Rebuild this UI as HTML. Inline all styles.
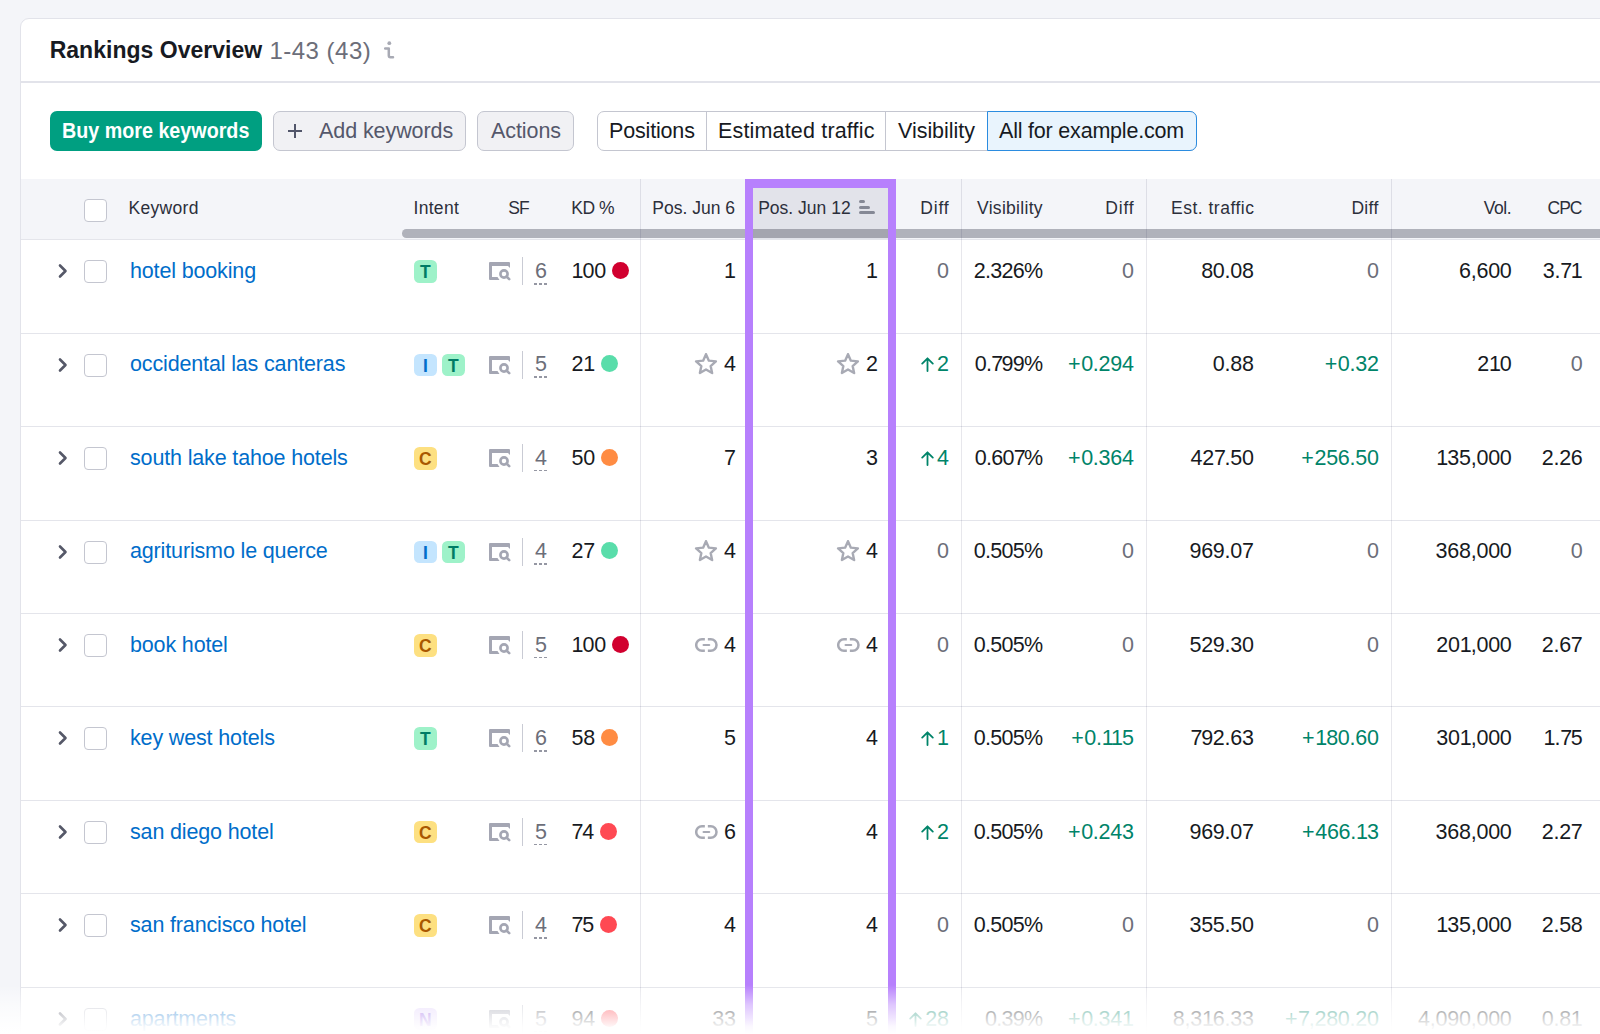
<!DOCTYPE html>
<html><head><meta charset="utf-8"><style>
html,body{margin:0;padding:0;width:1600px;height:1034px;overflow:hidden;background:#f4f5f9;font-family:"Liberation Sans",sans-serif;}
.t{position:absolute;white-space:nowrap;}
.a{position:absolute;}
</style></head><body>

<div class="a" style="left:20px;top:18px;width:1600px;height:1100px;background:#fff;border:1px solid #e2e3ea;border-radius:9px;box-sizing:border-box"></div>
<div class="t" style="left:49.68px;top:36.03px;font-size:23px;line-height:28px;color:#171a22;font-weight:700;letter-spacing:0.02px;">Rankings Overview</div>
<div class="t" style="left:269.4px;top:35.58px;font-size:24px;line-height:29px;color:#6c6e79;font-weight:400;letter-spacing:0.5px;">1-43 (43)</div>
<svg class="a" style="left:382px;top:40px" width="14" height="20" viewBox="0 0 14 20"><circle cx="7.3" cy="3.2" r="1.9" fill="#a8aab4"/><path d="M3.2 8.4 H6.8 V15.6 Q6.8 17.2 8.4 17.2 H11" fill="none" stroke="#a8aab4" stroke-width="2.5" stroke-linecap="round" stroke-linejoin="round"/></svg>
<div class="a" style="left:21px;top:81px;width:1579px;height:1.5px;background:#e2e3ea"></div>
<div class="a" style="left:50px;top:111px;width:212px;height:40px;background:#009f81;border-radius:7px"></div>
<div class="t" style="left:61.6px;top:118.18px;font-size:22px;line-height:26px;color:#fff;font-weight:700;letter-spacing:0.015px;transform:scaleX(0.895);transform-origin:0 0">Buy more keywords</div>
<div class="a" style="left:273px;top:111px;width:193px;height:40px;background:#f1f1f4;border:1px solid #c4c6d0;border-radius:7px;box-sizing:border-box"></div>
<div class="a" style="left:288px;top:130px;width:14px;height:2px;background:#52566a"></div><div class="a" style="left:294px;top:124px;width:2px;height:14px;background:#52566a"></div>
<div class="t" style="left:319.0px;top:118.35px;font-size:21.5px;line-height:26px;color:#55586b;font-weight:400;letter-spacing:-0.08000000000000007px;">Add keywords</div>
<div class="a" style="left:477px;top:111px;width:97px;height:40px;background:#f1f1f4;border:1px solid #c4c6d0;border-radius:7px;box-sizing:border-box"></div>
<div class="t" style="left:491.0px;top:118.35px;font-size:21.5px;line-height:26px;color:#55586b;font-weight:400;letter-spacing:-0.07000000000000006px;">Actions</div>
<div class="a" style="left:597px;top:111px;width:600px;height:40px;background:#fff;border:1px solid #c4c6d0;border-radius:7px;box-sizing:border-box"></div>
<div class="a" style="left:706px;top:112px;width:1px;height:38px;background:#c4c6d0"></div>
<div class="a" style="left:885px;top:112px;width:1px;height:38px;background:#c4c6d0"></div>
<div class="a" style="left:987px;top:111px;width:210px;height:40px;background:#e9f4fd;border:1px solid #2b8ce0;border-radius:0 7px 7px 0;box-sizing:border-box"></div>
<div class="t" style="left:609.0px;top:118.35px;font-size:21.5px;line-height:26px;color:#171a22;font-weight:400;letter-spacing:-0.17000000000000004px;">Positions</div>
<div class="t" style="left:718.0px;top:118.35px;font-size:21.5px;line-height:26px;color:#171a22;font-weight:400;letter-spacing:0.17000000000000004px;">Estimated traffic</div>
<div class="t" style="left:898.0px;top:118.35px;font-size:21.5px;line-height:26px;color:#171a22;font-weight:400;letter-spacing:-0.03300000000000003px;">Visibility</div>
<div class="t" style="left:999.0px;top:118.35px;font-size:21.5px;line-height:26px;color:#171a22;font-weight:400;letter-spacing:-0.19999999999999996px;">All for example.com</div>
<div class="a" style="left:21px;top:179px;width:1579px;height:60px;background:#f4f5f9"></div>
<div class="a" style="left:753px;top:179px;width:135px;height:60px;background:#e2e3ea"></div>
<div class="a" style="left:402px;top:229px;width:1250px;height:8.6px;background:#b0b2bb;border-radius:4.3px;z-index:2"></div>
<div class="a" style="left:753px;top:229px;width:135px;height:8.6px;background:#a4a5af;z-index:2"></div>
<div class="a" style="left:21px;top:238.8px;width:1579px;height:1.2px;background:#e4e5eb"></div>
<div class="a" style="left:84px;top:199px;width:23px;height:23px;border:1px solid #c4c6d0;border-radius:4px;box-sizing:border-box;background:#fff"></div>
<div class="t" style="left:128.5px;top:198.04px;font-size:17.5px;line-height:21px;color:#2c2f3b;font-weight:400;letter-spacing:0.3px;">Keyword</div>
<div class="t" style="left:413.5px;top:198.04px;font-size:17.5px;line-height:21px;color:#2c2f3b;font-weight:400;letter-spacing:0.3px;">Intent</div>
<div class="t" style="left:508.3px;top:198.04px;font-size:17.5px;line-height:21px;color:#2c2f3b;font-weight:400;letter-spacing:-1.0px;">SF</div>
<div class="t" style="left:571.3px;top:198.04px;font-size:17.5px;line-height:21px;color:#2c2f3b;font-weight:400;letter-spacing:-0.5px;">KD %</div>
<div class="t" style="right:865.00px;top:198.04px;font-size:17.5px;line-height:21px;color:#2c2f3b;font-weight:400;letter-spacing:0.0px;">Pos. Jun 6</div>
<div class="t" style="left:758.2px;top:198.04px;font-size:17.5px;line-height:21px;color:#2c2f3b;font-weight:400;letter-spacing:0.0px;">Pos. Jun 12</div>
<div class="a" style="left:859px;top:200px;width:6px;height:3px;background:#858895;border-radius:1.5px"></div><div class="a" style="left:859px;top:205.5px;width:11px;height:3px;background:#858895;border-radius:1.5px"></div><div class="a" style="left:859px;top:211px;width:16px;height:3px;background:#858895;border-radius:1.5px"></div>
<div class="t" style="right:650.43px;top:198.04px;font-size:17.5px;line-height:21px;color:#2c2f3b;font-weight:400;letter-spacing:0.867px;">Diff</div>
<div class="t" style="left:977.0px;top:198.04px;font-size:17.5px;line-height:21px;color:#2c2f3b;font-weight:400;letter-spacing:0.3px;">Visibility</div>
<div class="t" style="right:465.43px;top:198.04px;font-size:17.5px;line-height:21px;color:#2c2f3b;font-weight:400;letter-spacing:0.867px;">Diff</div>
<div class="t" style="left:1171.0px;top:198.04px;font-size:17.5px;line-height:21px;color:#2c2f3b;font-weight:400;letter-spacing:0.5px;">Est. traffic</div>
<div class="t" style="right:221.29px;top:198.04px;font-size:17.5px;line-height:21px;color:#2c2f3b;font-weight:400;letter-spacing:0.352px;">Diff</div>
<div class="t" style="right:88.95px;top:198.04px;font-size:17.5px;line-height:21px;color:#2c2f3b;font-weight:400;letter-spacing:-0.452px;">Vol.</div>
<div class="t" style="right:18.50px;top:198.04px;font-size:17.5px;line-height:21px;color:#2c2f3b;font-weight:400;letter-spacing:-1.0px;">CPC</div>
<div class="a" style="left:640px;top:179px;width:1px;height:900px;background:rgba(30,30,80,0.105);z-index:2"></div>
<div class="a" style="left:961px;top:179px;width:1px;height:900px;background:rgba(30,30,80,0.105);z-index:2"></div>
<div class="a" style="left:1146px;top:179px;width:1px;height:900px;background:rgba(30,30,80,0.105);z-index:2"></div>
<div class="a" style="left:1391px;top:179px;width:1px;height:900px;background:rgba(30,30,80,0.105);z-index:2"></div>
<div class="a" style="left:21px;top:332.60px;width:1579px;height:1px;background:#e4e5eb"></div>
<svg width="12" height="16" viewBox="0 0 12 16" style="position:absolute;left:57px;top:263.20px"><path d="M3 2.5 L8.5 8 L3 13.5" fill="none" stroke="#555868" stroke-width="2.6" stroke-linecap="round" stroke-linejoin="round"/></svg>
<div class="a" style="left:84px;top:260.20px;width:23px;height:23px;border:1px solid #c4c6d0;border-radius:4px;box-sizing:border-box;background:#fff"></div>
<div class="t" style="left:130px;top:258.05px;font-size:21.5px;line-height:26px;color:#006dca;font-weight:400;letter-spacing:-0.15px;">hotel booking</div>
<div class="a" style="left:414px;top:260.20px;width:22.7px;height:22.6px;background:#9ef2c9;border-radius:5.5px;color:#007c65;font-weight:700;font-size:17.5px;line-height:24px;text-align:center">T</div>
<svg width="22" height="19" viewBox="0 0 22 19" style="position:absolute;left:489px;top:262.20px"><path d="M0 1 Q0 0 1 0 H20 Q21 0 21 1 V6 L19 4 V4 H3 V15 H8.5 L10.5 18 H1 Q0 18 0 17 Z" fill="#a4a6b3"/><circle cx="15" cy="12" r="3.6" fill="none" stroke="#a4a6b3" stroke-width="2.6"/><path d="M17.5 14.5 L20.2 17.2" stroke="#a4a6b3" stroke-width="2.6" stroke-linecap="round"/></svg>
<div class="a" style="left:522px;top:257.20px;width:1.3px;height:28px;background:#c9cbd4"></div>
<div class="t" style="left:535px;top:258.05px;font-size:21.5px;line-height:26px;color:#6c6e79;font-weight:400;letter-spacing:0px;">6</div>
<div class="a" style="left:534.4px;top:283.00px;width:12.8px;height:1.5px;background:repeating-linear-gradient(to right,#9597a3 0 3.2px,transparent 3.2px 4.8px)"></div>
<div class="t" style="left:571.5px;top:258.05px;font-size:21.5px;line-height:26px;color:#171a22;font-weight:400;letter-spacing:0px;"><span style="letter-spacing:-1.00px">1</span><span style="letter-spacing:-0.25px">0</span>0<span style="display:inline-block;width:17px;height:17px;border-radius:50%;background:#d1002f;vertical-align:baseline;position:relative;top:1px;margin-left:5.5px"></span></div>
<div class="t" style="right:864.00px;top:258.05px;font-size:21.5px;line-height:26px;color:#171a22;font-weight:400;letter-spacing:0px;">1</div>
<div class="t" style="right:722.00px;top:258.05px;font-size:21.5px;line-height:26px;color:#171a22;font-weight:400;letter-spacing:0px;">1</div>
<div class="t" style="right:651.00px;top:258.05px;font-size:21.5px;line-height:26px;color:#6c6e79;font-weight:400;letter-spacing:0px;">0</div>
<div class="t" style="right:557.00px;top:258.05px;font-size:21.5px;line-height:26px;color:#171a22;font-weight:400;letter-spacing:0px;"><span style="letter-spacing:-0.75px">2</span><span style="letter-spacing:-0.75px">.</span><span style="letter-spacing:-0.75px">3</span><span style="letter-spacing:-0.75px">2</span><span style="letter-spacing:-0.75px">6</span>%</div>
<div class="t" style="right:466.00px;top:258.05px;font-size:21.5px;line-height:26px;color:#6c6e79;font-weight:400;letter-spacing:0px;">0</div>
<div class="t" style="right:346.00px;top:258.05px;font-size:21.5px;line-height:26px;color:#171a22;font-weight:400;letter-spacing:0px;"><span style="letter-spacing:-0.25px">8</span><span style="letter-spacing:-0.25px">0</span><span style="letter-spacing:-0.25px">.</span><span style="letter-spacing:-0.25px">0</span>8</div>
<div class="t" style="right:221.00px;top:258.05px;font-size:21.5px;line-height:26px;color:#6c6e79;font-weight:400;letter-spacing:0px;">0</div>
<div class="t" style="right:88.20px;top:258.05px;font-size:21.5px;line-height:26px;color:#171a22;font-weight:400;letter-spacing:0px;"><span style="letter-spacing:-0.25px">6</span><span style="letter-spacing:-0.25px">,</span><span style="letter-spacing:-0.25px">6</span><span style="letter-spacing:-0.25px">0</span>0</div>
<div class="t" style="right:17.20px;top:258.05px;font-size:21.5px;line-height:26px;color:#171a22;font-weight:400;letter-spacing:0px;"><span style="letter-spacing:-0.25px">3</span><span style="letter-spacing:-0.25px">.</span><span style="letter-spacing:-1.30px">7</span>1</div>
<div class="a" style="left:21px;top:426.07px;width:1579px;height:1px;background:#e4e5eb"></div>
<svg width="12" height="16" viewBox="0 0 12 16" style="position:absolute;left:57px;top:356.64px"><path d="M3 2.5 L8.5 8 L3 13.5" fill="none" stroke="#555868" stroke-width="2.6" stroke-linecap="round" stroke-linejoin="round"/></svg>
<div class="a" style="left:84px;top:353.64px;width:23px;height:23px;border:1px solid #c4c6d0;border-radius:4px;box-sizing:border-box;background:#fff"></div>
<div class="t" style="left:130px;top:351.49px;font-size:21.5px;line-height:26px;color:#006dca;font-weight:400;letter-spacing:-0.15px;">occidental las canteras</div>
<div class="a" style="left:414px;top:353.64px;width:22.7px;height:22.6px;background:#c4e5fe;border-radius:5.5px;color:#006dca;font-weight:700;font-size:17.5px;line-height:24px;text-align:center">I</div>
<div class="a" style="left:442px;top:353.64px;width:22.7px;height:22.6px;background:#9ef2c9;border-radius:5.5px;color:#007c65;font-weight:700;font-size:17.5px;line-height:24px;text-align:center">T</div>
<svg width="22" height="19" viewBox="0 0 22 19" style="position:absolute;left:489px;top:355.64px"><path d="M0 1 Q0 0 1 0 H20 Q21 0 21 1 V6 L19 4 V4 H3 V15 H8.5 L10.5 18 H1 Q0 18 0 17 Z" fill="#a4a6b3"/><circle cx="15" cy="12" r="3.6" fill="none" stroke="#a4a6b3" stroke-width="2.6"/><path d="M17.5 14.5 L20.2 17.2" stroke="#a4a6b3" stroke-width="2.6" stroke-linecap="round"/></svg>
<div class="a" style="left:522px;top:350.64px;width:1.3px;height:28px;background:#c9cbd4"></div>
<div class="t" style="left:535px;top:351.49px;font-size:21.5px;line-height:26px;color:#6c6e79;font-weight:400;letter-spacing:0px;">5</div>
<div class="a" style="left:534.4px;top:376.44px;width:12.8px;height:1.5px;background:repeating-linear-gradient(to right,#9597a3 0 3.2px,transparent 3.2px 4.8px)"></div>
<div class="t" style="left:571.5px;top:351.49px;font-size:21.5px;line-height:26px;color:#171a22;font-weight:400;letter-spacing:0px;"><span style="letter-spacing:-0.25px">2</span>1<span style="display:inline-block;width:17px;height:17px;border-radius:50%;background:#59ddaa;vertical-align:baseline;position:relative;top:1px;margin-left:5.5px"></span></div>
<div class="t" style="right:864.00px;top:351.49px;font-size:21.5px;line-height:26px;color:#171a22;font-weight:400;letter-spacing:0px;"><svg width="24" height="22" viewBox="0 0 24 22" style="display:inline-block;vertical-align:-3.5px;margin-right:6.4px"><path d="M12.00 1.20 L14.87 7.65 L21.89 8.39 L16.65 13.11 L18.11 20.01 L12.00 16.49 L5.89 20.01 L7.35 13.11 L2.11 8.39 L9.13 7.65 Z" fill="none" stroke="#a8aab4" stroke-width="2.4" stroke-linejoin="round"/></svg>4</div>
<div class="t" style="right:722.00px;top:351.49px;font-size:21.5px;line-height:26px;color:#171a22;font-weight:400;letter-spacing:0px;"><svg width="24" height="22" viewBox="0 0 24 22" style="display:inline-block;vertical-align:-3.5px;margin-right:6.4px"><path d="M12.00 1.20 L14.87 7.65 L21.89 8.39 L16.65 13.11 L18.11 20.01 L12.00 16.49 L5.89 20.01 L7.35 13.11 L2.11 8.39 L9.13 7.65 Z" fill="none" stroke="#a8aab4" stroke-width="2.4" stroke-linejoin="round"/></svg>2</div>
<div class="t" style="right:651.00px;top:351.49px;font-size:21.5px;line-height:26px;color:#008469;font-weight:400;letter-spacing:0px;"><svg width="13" height="15" viewBox="0 0 13 15" style="display:inline-block;vertical-align:-1px;margin-right:3px"><path d="M6.5 14 V1.4 M1.2 6.6 L6.5 1.3 L11.8 6.6" fill="none" stroke="#008469" stroke-width="1.8" stroke-linecap="round" stroke-linejoin="round"/></svg>2</div>
<div class="t" style="right:557.00px;top:351.49px;font-size:21.5px;line-height:26px;color:#171a22;font-weight:400;letter-spacing:0px;"><span style="letter-spacing:-0.75px">0</span><span style="letter-spacing:-0.75px">.</span><span style="letter-spacing:-1.80px">7</span><span style="letter-spacing:-0.75px">9</span><span style="letter-spacing:-0.75px">9</span>%</div>
<div class="t" style="right:466.00px;top:351.49px;font-size:21.5px;line-height:26px;color:#008469;font-weight:400;letter-spacing:0px;"><span style="letter-spacing:0.50px">+</span><span style="letter-spacing:-0.25px">0</span><span style="letter-spacing:-0.25px">.</span><span style="letter-spacing:-0.25px">2</span><span style="letter-spacing:-0.25px">9</span>4</div>
<div class="t" style="right:346.00px;top:351.49px;font-size:21.5px;line-height:26px;color:#171a22;font-weight:400;letter-spacing:0px;"><span style="letter-spacing:-0.25px">0</span><span style="letter-spacing:-0.25px">.</span><span style="letter-spacing:-0.25px">8</span>8</div>
<div class="t" style="right:221.00px;top:351.49px;font-size:21.5px;line-height:26px;color:#008469;font-weight:400;letter-spacing:0px;"><span style="letter-spacing:0.50px">+</span><span style="letter-spacing:-0.25px">0</span><span style="letter-spacing:-0.25px">.</span><span style="letter-spacing:-0.25px">3</span>2</div>
<div class="t" style="right:88.20px;top:351.49px;font-size:21.5px;line-height:26px;color:#171a22;font-weight:400;letter-spacing:0px;"><span style="letter-spacing:-0.25px">2</span><span style="letter-spacing:-1.00px">1</span>0</div>
<div class="t" style="right:17.20px;top:351.49px;font-size:21.5px;line-height:26px;color:#6c6e79;font-weight:400;letter-spacing:0px;">0</div>
<div class="a" style="left:21px;top:519.54px;width:1579px;height:1px;background:#e4e5eb"></div>
<svg width="12" height="16" viewBox="0 0 12 16" style="position:absolute;left:57px;top:450.08px"><path d="M3 2.5 L8.5 8 L3 13.5" fill="none" stroke="#555868" stroke-width="2.6" stroke-linecap="round" stroke-linejoin="round"/></svg>
<div class="a" style="left:84px;top:447.08px;width:23px;height:23px;border:1px solid #c4c6d0;border-radius:4px;box-sizing:border-box;background:#fff"></div>
<div class="t" style="left:130px;top:444.93px;font-size:21.5px;line-height:26px;color:#006dca;font-weight:400;letter-spacing:-0.15px;">south lake tahoe hotels</div>
<div class="a" style="left:414px;top:447.08px;width:22.7px;height:22.6px;background:#fde081;border-radius:5.5px;color:#a95700;font-weight:700;font-size:17.5px;line-height:24px;text-align:center">C</div>
<svg width="22" height="19" viewBox="0 0 22 19" style="position:absolute;left:489px;top:449.08px"><path d="M0 1 Q0 0 1 0 H20 Q21 0 21 1 V6 L19 4 V4 H3 V15 H8.5 L10.5 18 H1 Q0 18 0 17 Z" fill="#a4a6b3"/><circle cx="15" cy="12" r="3.6" fill="none" stroke="#a4a6b3" stroke-width="2.6"/><path d="M17.5 14.5 L20.2 17.2" stroke="#a4a6b3" stroke-width="2.6" stroke-linecap="round"/></svg>
<div class="a" style="left:522px;top:444.08px;width:1.3px;height:28px;background:#c9cbd4"></div>
<div class="t" style="left:535px;top:444.93px;font-size:21.5px;line-height:26px;color:#6c6e79;font-weight:400;letter-spacing:0px;">4</div>
<div class="a" style="left:534.4px;top:469.88px;width:12.8px;height:1.5px;background:repeating-linear-gradient(to right,#9597a3 0 3.2px,transparent 3.2px 4.8px)"></div>
<div class="t" style="left:571.5px;top:444.93px;font-size:21.5px;line-height:26px;color:#171a22;font-weight:400;letter-spacing:0px;"><span style="letter-spacing:-0.25px">5</span>0<span style="display:inline-block;width:17px;height:17px;border-radius:50%;background:#ff8c43;vertical-align:baseline;position:relative;top:1px;margin-left:5.5px"></span></div>
<div class="t" style="right:864.00px;top:444.93px;font-size:21.5px;line-height:26px;color:#171a22;font-weight:400;letter-spacing:0px;">7</div>
<div class="t" style="right:722.00px;top:444.93px;font-size:21.5px;line-height:26px;color:#171a22;font-weight:400;letter-spacing:0px;">3</div>
<div class="t" style="right:651.00px;top:444.93px;font-size:21.5px;line-height:26px;color:#008469;font-weight:400;letter-spacing:0px;"><svg width="13" height="15" viewBox="0 0 13 15" style="display:inline-block;vertical-align:-1px;margin-right:3px"><path d="M6.5 14 V1.4 M1.2 6.6 L6.5 1.3 L11.8 6.6" fill="none" stroke="#008469" stroke-width="1.8" stroke-linecap="round" stroke-linejoin="round"/></svg>4</div>
<div class="t" style="right:557.00px;top:444.93px;font-size:21.5px;line-height:26px;color:#171a22;font-weight:400;letter-spacing:0px;"><span style="letter-spacing:-0.75px">0</span><span style="letter-spacing:-0.75px">.</span><span style="letter-spacing:-0.75px">6</span><span style="letter-spacing:-0.75px">0</span><span style="letter-spacing:-1.80px">7</span>%</div>
<div class="t" style="right:466.00px;top:444.93px;font-size:21.5px;line-height:26px;color:#008469;font-weight:400;letter-spacing:0px;"><span style="letter-spacing:0.50px">+</span><span style="letter-spacing:-0.25px">0</span><span style="letter-spacing:-0.25px">.</span><span style="letter-spacing:-0.25px">3</span><span style="letter-spacing:-0.25px">6</span>4</div>
<div class="t" style="right:346.00px;top:444.93px;font-size:21.5px;line-height:26px;color:#171a22;font-weight:400;letter-spacing:0px;"><span style="letter-spacing:-0.25px">4</span><span style="letter-spacing:-0.25px">2</span><span style="letter-spacing:-1.30px">7</span><span style="letter-spacing:-0.25px">.</span><span style="letter-spacing:-0.25px">5</span>0</div>
<div class="t" style="right:221.00px;top:444.93px;font-size:21.5px;line-height:26px;color:#008469;font-weight:400;letter-spacing:0px;"><span style="letter-spacing:0.50px">+</span><span style="letter-spacing:-0.25px">2</span><span style="letter-spacing:-0.25px">5</span><span style="letter-spacing:-0.25px">6</span><span style="letter-spacing:-0.25px">.</span><span style="letter-spacing:-0.25px">5</span>0</div>
<div class="t" style="right:88.20px;top:444.93px;font-size:21.5px;line-height:26px;color:#171a22;font-weight:400;letter-spacing:0px;"><span style="letter-spacing:-1.00px">1</span><span style="letter-spacing:-0.25px">3</span><span style="letter-spacing:-0.25px">5</span><span style="letter-spacing:-0.25px">,</span><span style="letter-spacing:-0.25px">0</span><span style="letter-spacing:-0.25px">0</span>0</div>
<div class="t" style="right:17.20px;top:444.93px;font-size:21.5px;line-height:26px;color:#171a22;font-weight:400;letter-spacing:0px;"><span style="letter-spacing:-0.25px">2</span><span style="letter-spacing:-0.25px">.</span><span style="letter-spacing:-0.25px">2</span>6</div>
<div class="a" style="left:21px;top:613.01px;width:1579px;height:1px;background:#e4e5eb"></div>
<svg width="12" height="16" viewBox="0 0 12 16" style="position:absolute;left:57px;top:543.52px"><path d="M3 2.5 L8.5 8 L3 13.5" fill="none" stroke="#555868" stroke-width="2.6" stroke-linecap="round" stroke-linejoin="round"/></svg>
<div class="a" style="left:84px;top:540.52px;width:23px;height:23px;border:1px solid #c4c6d0;border-radius:4px;box-sizing:border-box;background:#fff"></div>
<div class="t" style="left:130px;top:538.37px;font-size:21.5px;line-height:26px;color:#006dca;font-weight:400;letter-spacing:-0.15px;">agriturismo le querce</div>
<div class="a" style="left:414px;top:540.52px;width:22.7px;height:22.6px;background:#c4e5fe;border-radius:5.5px;color:#006dca;font-weight:700;font-size:17.5px;line-height:24px;text-align:center">I</div>
<div class="a" style="left:442px;top:540.52px;width:22.7px;height:22.6px;background:#9ef2c9;border-radius:5.5px;color:#007c65;font-weight:700;font-size:17.5px;line-height:24px;text-align:center">T</div>
<svg width="22" height="19" viewBox="0 0 22 19" style="position:absolute;left:489px;top:542.52px"><path d="M0 1 Q0 0 1 0 H20 Q21 0 21 1 V6 L19 4 V4 H3 V15 H8.5 L10.5 18 H1 Q0 18 0 17 Z" fill="#a4a6b3"/><circle cx="15" cy="12" r="3.6" fill="none" stroke="#a4a6b3" stroke-width="2.6"/><path d="M17.5 14.5 L20.2 17.2" stroke="#a4a6b3" stroke-width="2.6" stroke-linecap="round"/></svg>
<div class="a" style="left:522px;top:537.52px;width:1.3px;height:28px;background:#c9cbd4"></div>
<div class="t" style="left:535px;top:538.37px;font-size:21.5px;line-height:26px;color:#6c6e79;font-weight:400;letter-spacing:0px;">4</div>
<div class="a" style="left:534.4px;top:563.32px;width:12.8px;height:1.5px;background:repeating-linear-gradient(to right,#9597a3 0 3.2px,transparent 3.2px 4.8px)"></div>
<div class="t" style="left:571.5px;top:538.37px;font-size:21.5px;line-height:26px;color:#171a22;font-weight:400;letter-spacing:0px;"><span style="letter-spacing:-0.25px">2</span>7<span style="display:inline-block;width:17px;height:17px;border-radius:50%;background:#59ddaa;vertical-align:baseline;position:relative;top:1px;margin-left:5.5px"></span></div>
<div class="t" style="right:864.00px;top:538.37px;font-size:21.5px;line-height:26px;color:#171a22;font-weight:400;letter-spacing:0px;"><svg width="24" height="22" viewBox="0 0 24 22" style="display:inline-block;vertical-align:-3.5px;margin-right:6.4px"><path d="M12.00 1.20 L14.87 7.65 L21.89 8.39 L16.65 13.11 L18.11 20.01 L12.00 16.49 L5.89 20.01 L7.35 13.11 L2.11 8.39 L9.13 7.65 Z" fill="none" stroke="#a8aab4" stroke-width="2.4" stroke-linejoin="round"/></svg>4</div>
<div class="t" style="right:722.00px;top:538.37px;font-size:21.5px;line-height:26px;color:#171a22;font-weight:400;letter-spacing:0px;"><svg width="24" height="22" viewBox="0 0 24 22" style="display:inline-block;vertical-align:-3.5px;margin-right:6.4px"><path d="M12.00 1.20 L14.87 7.65 L21.89 8.39 L16.65 13.11 L18.11 20.01 L12.00 16.49 L5.89 20.01 L7.35 13.11 L2.11 8.39 L9.13 7.65 Z" fill="none" stroke="#a8aab4" stroke-width="2.4" stroke-linejoin="round"/></svg>4</div>
<div class="t" style="right:651.00px;top:538.37px;font-size:21.5px;line-height:26px;color:#6c6e79;font-weight:400;letter-spacing:0px;">0</div>
<div class="t" style="right:557.00px;top:538.37px;font-size:21.5px;line-height:26px;color:#171a22;font-weight:400;letter-spacing:0px;"><span style="letter-spacing:-0.75px">0</span><span style="letter-spacing:-0.75px">.</span><span style="letter-spacing:-0.75px">5</span><span style="letter-spacing:-0.75px">0</span><span style="letter-spacing:-0.75px">5</span>%</div>
<div class="t" style="right:466.00px;top:538.37px;font-size:21.5px;line-height:26px;color:#6c6e79;font-weight:400;letter-spacing:0px;">0</div>
<div class="t" style="right:346.00px;top:538.37px;font-size:21.5px;line-height:26px;color:#171a22;font-weight:400;letter-spacing:0px;"><span style="letter-spacing:-0.25px">9</span><span style="letter-spacing:-0.25px">6</span><span style="letter-spacing:-0.25px">9</span><span style="letter-spacing:-0.25px">.</span><span style="letter-spacing:-0.25px">0</span>7</div>
<div class="t" style="right:221.00px;top:538.37px;font-size:21.5px;line-height:26px;color:#6c6e79;font-weight:400;letter-spacing:0px;">0</div>
<div class="t" style="right:88.20px;top:538.37px;font-size:21.5px;line-height:26px;color:#171a22;font-weight:400;letter-spacing:0px;"><span style="letter-spacing:-0.25px">3</span><span style="letter-spacing:-0.25px">6</span><span style="letter-spacing:-0.25px">8</span><span style="letter-spacing:-0.25px">,</span><span style="letter-spacing:-0.25px">0</span><span style="letter-spacing:-0.25px">0</span>0</div>
<div class="t" style="right:17.20px;top:538.37px;font-size:21.5px;line-height:26px;color:#6c6e79;font-weight:400;letter-spacing:0px;">0</div>
<div class="a" style="left:21px;top:706.48px;width:1579px;height:1px;background:#e4e5eb"></div>
<svg width="12" height="16" viewBox="0 0 12 16" style="position:absolute;left:57px;top:636.96px"><path d="M3 2.5 L8.5 8 L3 13.5" fill="none" stroke="#555868" stroke-width="2.6" stroke-linecap="round" stroke-linejoin="round"/></svg>
<div class="a" style="left:84px;top:633.96px;width:23px;height:23px;border:1px solid #c4c6d0;border-radius:4px;box-sizing:border-box;background:#fff"></div>
<div class="t" style="left:130px;top:631.81px;font-size:21.5px;line-height:26px;color:#006dca;font-weight:400;letter-spacing:-0.15px;">book hotel</div>
<div class="a" style="left:414px;top:633.96px;width:22.7px;height:22.6px;background:#fde081;border-radius:5.5px;color:#a95700;font-weight:700;font-size:17.5px;line-height:24px;text-align:center">C</div>
<svg width="22" height="19" viewBox="0 0 22 19" style="position:absolute;left:489px;top:635.96px"><path d="M0 1 Q0 0 1 0 H20 Q21 0 21 1 V6 L19 4 V4 H3 V15 H8.5 L10.5 18 H1 Q0 18 0 17 Z" fill="#a4a6b3"/><circle cx="15" cy="12" r="3.6" fill="none" stroke="#a4a6b3" stroke-width="2.6"/><path d="M17.5 14.5 L20.2 17.2" stroke="#a4a6b3" stroke-width="2.6" stroke-linecap="round"/></svg>
<div class="a" style="left:522px;top:630.96px;width:1.3px;height:28px;background:#c9cbd4"></div>
<div class="t" style="left:535px;top:631.81px;font-size:21.5px;line-height:26px;color:#6c6e79;font-weight:400;letter-spacing:0px;">5</div>
<div class="a" style="left:534.4px;top:656.76px;width:12.8px;height:1.5px;background:repeating-linear-gradient(to right,#9597a3 0 3.2px,transparent 3.2px 4.8px)"></div>
<div class="t" style="left:571.5px;top:631.81px;font-size:21.5px;line-height:26px;color:#171a22;font-weight:400;letter-spacing:0px;"><span style="letter-spacing:-1.00px">1</span><span style="letter-spacing:-0.25px">0</span>0<span style="display:inline-block;width:17px;height:17px;border-radius:50%;background:#d1002f;vertical-align:baseline;position:relative;top:1px;margin-left:5.5px"></span></div>
<div class="t" style="right:864.00px;top:631.81px;font-size:21.5px;line-height:26px;color:#171a22;font-weight:400;letter-spacing:0px;"><svg width="23" height="14" viewBox="0 0 23 14" style="display:inline-block;vertical-align:-0.3px;margin-right:5.8px"><path d="M9.85 1.25 H6.95 A5.75 5.75 0 0 0 6.95 12.75 H9.85 M12.85 1.25 H15.75 A5.75 5.75 0 0 1 15.75 12.75 H12.85" fill="none" stroke="#a8aab4" stroke-width="2.5" stroke-linecap="butt"/><path d="M8.6 7 H14.2" fill="none" stroke="#a8aab4" stroke-width="2.2" stroke-linecap="round"/></svg>4</div>
<div class="t" style="right:722.00px;top:631.81px;font-size:21.5px;line-height:26px;color:#171a22;font-weight:400;letter-spacing:0px;"><svg width="23" height="14" viewBox="0 0 23 14" style="display:inline-block;vertical-align:-0.3px;margin-right:5.8px"><path d="M9.85 1.25 H6.95 A5.75 5.75 0 0 0 6.95 12.75 H9.85 M12.85 1.25 H15.75 A5.75 5.75 0 0 1 15.75 12.75 H12.85" fill="none" stroke="#a8aab4" stroke-width="2.5" stroke-linecap="butt"/><path d="M8.6 7 H14.2" fill="none" stroke="#a8aab4" stroke-width="2.2" stroke-linecap="round"/></svg>4</div>
<div class="t" style="right:651.00px;top:631.81px;font-size:21.5px;line-height:26px;color:#6c6e79;font-weight:400;letter-spacing:0px;">0</div>
<div class="t" style="right:557.00px;top:631.81px;font-size:21.5px;line-height:26px;color:#171a22;font-weight:400;letter-spacing:0px;"><span style="letter-spacing:-0.75px">0</span><span style="letter-spacing:-0.75px">.</span><span style="letter-spacing:-0.75px">5</span><span style="letter-spacing:-0.75px">0</span><span style="letter-spacing:-0.75px">5</span>%</div>
<div class="t" style="right:466.00px;top:631.81px;font-size:21.5px;line-height:26px;color:#6c6e79;font-weight:400;letter-spacing:0px;">0</div>
<div class="t" style="right:346.00px;top:631.81px;font-size:21.5px;line-height:26px;color:#171a22;font-weight:400;letter-spacing:0px;"><span style="letter-spacing:-0.25px">5</span><span style="letter-spacing:-0.25px">2</span><span style="letter-spacing:-0.25px">9</span><span style="letter-spacing:-0.25px">.</span><span style="letter-spacing:-0.25px">3</span>0</div>
<div class="t" style="right:221.00px;top:631.81px;font-size:21.5px;line-height:26px;color:#6c6e79;font-weight:400;letter-spacing:0px;">0</div>
<div class="t" style="right:88.20px;top:631.81px;font-size:21.5px;line-height:26px;color:#171a22;font-weight:400;letter-spacing:0px;"><span style="letter-spacing:-0.25px">2</span><span style="letter-spacing:-0.25px">0</span><span style="letter-spacing:-1.00px">1</span><span style="letter-spacing:-0.25px">,</span><span style="letter-spacing:-0.25px">0</span><span style="letter-spacing:-0.25px">0</span>0</div>
<div class="t" style="right:17.20px;top:631.81px;font-size:21.5px;line-height:26px;color:#171a22;font-weight:400;letter-spacing:0px;"><span style="letter-spacing:-0.25px">2</span><span style="letter-spacing:-0.25px">.</span><span style="letter-spacing:-0.25px">6</span>7</div>
<div class="a" style="left:21px;top:799.95px;width:1579px;height:1px;background:#e4e5eb"></div>
<svg width="12" height="16" viewBox="0 0 12 16" style="position:absolute;left:57px;top:730.40px"><path d="M3 2.5 L8.5 8 L3 13.5" fill="none" stroke="#555868" stroke-width="2.6" stroke-linecap="round" stroke-linejoin="round"/></svg>
<div class="a" style="left:84px;top:727.40px;width:23px;height:23px;border:1px solid #c4c6d0;border-radius:4px;box-sizing:border-box;background:#fff"></div>
<div class="t" style="left:130px;top:725.25px;font-size:21.5px;line-height:26px;color:#006dca;font-weight:400;letter-spacing:-0.15px;">key west hotels</div>
<div class="a" style="left:414px;top:727.40px;width:22.7px;height:22.6px;background:#9ef2c9;border-radius:5.5px;color:#007c65;font-weight:700;font-size:17.5px;line-height:24px;text-align:center">T</div>
<svg width="22" height="19" viewBox="0 0 22 19" style="position:absolute;left:489px;top:729.40px"><path d="M0 1 Q0 0 1 0 H20 Q21 0 21 1 V6 L19 4 V4 H3 V15 H8.5 L10.5 18 H1 Q0 18 0 17 Z" fill="#a4a6b3"/><circle cx="15" cy="12" r="3.6" fill="none" stroke="#a4a6b3" stroke-width="2.6"/><path d="M17.5 14.5 L20.2 17.2" stroke="#a4a6b3" stroke-width="2.6" stroke-linecap="round"/></svg>
<div class="a" style="left:522px;top:724.40px;width:1.3px;height:28px;background:#c9cbd4"></div>
<div class="t" style="left:535px;top:725.25px;font-size:21.5px;line-height:26px;color:#6c6e79;font-weight:400;letter-spacing:0px;">6</div>
<div class="a" style="left:534.4px;top:750.20px;width:12.8px;height:1.5px;background:repeating-linear-gradient(to right,#9597a3 0 3.2px,transparent 3.2px 4.8px)"></div>
<div class="t" style="left:571.5px;top:725.25px;font-size:21.5px;line-height:26px;color:#171a22;font-weight:400;letter-spacing:0px;"><span style="letter-spacing:-0.25px">5</span>8<span style="display:inline-block;width:17px;height:17px;border-radius:50%;background:#ff8c43;vertical-align:baseline;position:relative;top:1px;margin-left:5.5px"></span></div>
<div class="t" style="right:864.00px;top:725.25px;font-size:21.5px;line-height:26px;color:#171a22;font-weight:400;letter-spacing:0px;">5</div>
<div class="t" style="right:722.00px;top:725.25px;font-size:21.5px;line-height:26px;color:#171a22;font-weight:400;letter-spacing:0px;">4</div>
<div class="t" style="right:651.00px;top:725.25px;font-size:21.5px;line-height:26px;color:#008469;font-weight:400;letter-spacing:0px;"><svg width="13" height="15" viewBox="0 0 13 15" style="display:inline-block;vertical-align:-1px;margin-right:3px"><path d="M6.5 14 V1.4 M1.2 6.6 L6.5 1.3 L11.8 6.6" fill="none" stroke="#008469" stroke-width="1.8" stroke-linecap="round" stroke-linejoin="round"/></svg>1</div>
<div class="t" style="right:557.00px;top:725.25px;font-size:21.5px;line-height:26px;color:#171a22;font-weight:400;letter-spacing:0px;"><span style="letter-spacing:-0.75px">0</span><span style="letter-spacing:-0.75px">.</span><span style="letter-spacing:-0.75px">5</span><span style="letter-spacing:-0.75px">0</span><span style="letter-spacing:-0.75px">5</span>%</div>
<div class="t" style="right:466.00px;top:725.25px;font-size:21.5px;line-height:26px;color:#008469;font-weight:400;letter-spacing:0px;"><span style="letter-spacing:0.50px">+</span><span style="letter-spacing:-0.25px">0</span><span style="letter-spacing:-0.25px">.</span><span style="letter-spacing:-1.00px">1</span><span style="letter-spacing:-1.00px">1</span>5</div>
<div class="t" style="right:346.00px;top:725.25px;font-size:21.5px;line-height:26px;color:#171a22;font-weight:400;letter-spacing:0px;"><span style="letter-spacing:-1.30px">7</span><span style="letter-spacing:-0.25px">9</span><span style="letter-spacing:-0.25px">2</span><span style="letter-spacing:-0.25px">.</span><span style="letter-spacing:-0.25px">6</span>3</div>
<div class="t" style="right:221.00px;top:725.25px;font-size:21.5px;line-height:26px;color:#008469;font-weight:400;letter-spacing:0px;"><span style="letter-spacing:0.50px">+</span><span style="letter-spacing:-1.00px">1</span><span style="letter-spacing:-0.25px">8</span><span style="letter-spacing:-0.25px">0</span><span style="letter-spacing:-0.25px">.</span><span style="letter-spacing:-0.25px">6</span>0</div>
<div class="t" style="right:88.20px;top:725.25px;font-size:21.5px;line-height:26px;color:#171a22;font-weight:400;letter-spacing:0px;"><span style="letter-spacing:-0.25px">3</span><span style="letter-spacing:-0.25px">0</span><span style="letter-spacing:-1.00px">1</span><span style="letter-spacing:-0.25px">,</span><span style="letter-spacing:-0.25px">0</span><span style="letter-spacing:-0.25px">0</span>0</div>
<div class="t" style="right:17.20px;top:725.25px;font-size:21.5px;line-height:26px;color:#171a22;font-weight:400;letter-spacing:0px;"><span style="letter-spacing:-1.00px">1</span><span style="letter-spacing:-0.25px">.</span><span style="letter-spacing:-1.30px">7</span>5</div>
<div class="a" style="left:21px;top:893.42px;width:1579px;height:1px;background:#e4e5eb"></div>
<svg width="12" height="16" viewBox="0 0 12 16" style="position:absolute;left:57px;top:823.84px"><path d="M3 2.5 L8.5 8 L3 13.5" fill="none" stroke="#555868" stroke-width="2.6" stroke-linecap="round" stroke-linejoin="round"/></svg>
<div class="a" style="left:84px;top:820.84px;width:23px;height:23px;border:1px solid #c4c6d0;border-radius:4px;box-sizing:border-box;background:#fff"></div>
<div class="t" style="left:130px;top:818.69px;font-size:21.5px;line-height:26px;color:#006dca;font-weight:400;letter-spacing:-0.15px;">san diego hotel</div>
<div class="a" style="left:414px;top:820.84px;width:22.7px;height:22.6px;background:#fde081;border-radius:5.5px;color:#a95700;font-weight:700;font-size:17.5px;line-height:24px;text-align:center">C</div>
<svg width="22" height="19" viewBox="0 0 22 19" style="position:absolute;left:489px;top:822.84px"><path d="M0 1 Q0 0 1 0 H20 Q21 0 21 1 V6 L19 4 V4 H3 V15 H8.5 L10.5 18 H1 Q0 18 0 17 Z" fill="#a4a6b3"/><circle cx="15" cy="12" r="3.6" fill="none" stroke="#a4a6b3" stroke-width="2.6"/><path d="M17.5 14.5 L20.2 17.2" stroke="#a4a6b3" stroke-width="2.6" stroke-linecap="round"/></svg>
<div class="a" style="left:522px;top:817.84px;width:1.3px;height:28px;background:#c9cbd4"></div>
<div class="t" style="left:535px;top:818.69px;font-size:21.5px;line-height:26px;color:#6c6e79;font-weight:400;letter-spacing:0px;">5</div>
<div class="a" style="left:534.4px;top:843.64px;width:12.8px;height:1.5px;background:repeating-linear-gradient(to right,#9597a3 0 3.2px,transparent 3.2px 4.8px)"></div>
<div class="t" style="left:571.5px;top:818.69px;font-size:21.5px;line-height:26px;color:#171a22;font-weight:400;letter-spacing:0px;"><span style="letter-spacing:-1.30px">7</span>4<span style="display:inline-block;width:17px;height:17px;border-radius:50%;background:#ff4953;vertical-align:baseline;position:relative;top:1px;margin-left:5.5px"></span></div>
<div class="t" style="right:864.00px;top:818.69px;font-size:21.5px;line-height:26px;color:#171a22;font-weight:400;letter-spacing:0px;"><svg width="23" height="14" viewBox="0 0 23 14" style="display:inline-block;vertical-align:-0.3px;margin-right:5.8px"><path d="M9.85 1.25 H6.95 A5.75 5.75 0 0 0 6.95 12.75 H9.85 M12.85 1.25 H15.75 A5.75 5.75 0 0 1 15.75 12.75 H12.85" fill="none" stroke="#a8aab4" stroke-width="2.5" stroke-linecap="butt"/><path d="M8.6 7 H14.2" fill="none" stroke="#a8aab4" stroke-width="2.2" stroke-linecap="round"/></svg>6</div>
<div class="t" style="right:722.00px;top:818.69px;font-size:21.5px;line-height:26px;color:#171a22;font-weight:400;letter-spacing:0px;">4</div>
<div class="t" style="right:651.00px;top:818.69px;font-size:21.5px;line-height:26px;color:#008469;font-weight:400;letter-spacing:0px;"><svg width="13" height="15" viewBox="0 0 13 15" style="display:inline-block;vertical-align:-1px;margin-right:3px"><path d="M6.5 14 V1.4 M1.2 6.6 L6.5 1.3 L11.8 6.6" fill="none" stroke="#008469" stroke-width="1.8" stroke-linecap="round" stroke-linejoin="round"/></svg>2</div>
<div class="t" style="right:557.00px;top:818.69px;font-size:21.5px;line-height:26px;color:#171a22;font-weight:400;letter-spacing:0px;"><span style="letter-spacing:-0.75px">0</span><span style="letter-spacing:-0.75px">.</span><span style="letter-spacing:-0.75px">5</span><span style="letter-spacing:-0.75px">0</span><span style="letter-spacing:-0.75px">5</span>%</div>
<div class="t" style="right:466.00px;top:818.69px;font-size:21.5px;line-height:26px;color:#008469;font-weight:400;letter-spacing:0px;"><span style="letter-spacing:0.50px">+</span><span style="letter-spacing:-0.25px">0</span><span style="letter-spacing:-0.25px">.</span><span style="letter-spacing:-0.25px">2</span><span style="letter-spacing:-0.25px">4</span>3</div>
<div class="t" style="right:346.00px;top:818.69px;font-size:21.5px;line-height:26px;color:#171a22;font-weight:400;letter-spacing:0px;"><span style="letter-spacing:-0.25px">9</span><span style="letter-spacing:-0.25px">6</span><span style="letter-spacing:-0.25px">9</span><span style="letter-spacing:-0.25px">.</span><span style="letter-spacing:-0.25px">0</span>7</div>
<div class="t" style="right:221.00px;top:818.69px;font-size:21.5px;line-height:26px;color:#008469;font-weight:400;letter-spacing:0px;"><span style="letter-spacing:0.50px">+</span><span style="letter-spacing:-0.25px">4</span><span style="letter-spacing:-0.25px">6</span><span style="letter-spacing:-0.25px">6</span><span style="letter-spacing:-0.25px">.</span><span style="letter-spacing:-1.00px">1</span>3</div>
<div class="t" style="right:88.20px;top:818.69px;font-size:21.5px;line-height:26px;color:#171a22;font-weight:400;letter-spacing:0px;"><span style="letter-spacing:-0.25px">3</span><span style="letter-spacing:-0.25px">6</span><span style="letter-spacing:-0.25px">8</span><span style="letter-spacing:-0.25px">,</span><span style="letter-spacing:-0.25px">0</span><span style="letter-spacing:-0.25px">0</span>0</div>
<div class="t" style="right:17.20px;top:818.69px;font-size:21.5px;line-height:26px;color:#171a22;font-weight:400;letter-spacing:0px;"><span style="letter-spacing:-0.25px">2</span><span style="letter-spacing:-0.25px">.</span><span style="letter-spacing:-0.25px">2</span>7</div>
<div class="a" style="left:21px;top:986.89px;width:1579px;height:1px;background:#e4e5eb"></div>
<svg width="12" height="16" viewBox="0 0 12 16" style="position:absolute;left:57px;top:917.28px"><path d="M3 2.5 L8.5 8 L3 13.5" fill="none" stroke="#555868" stroke-width="2.6" stroke-linecap="round" stroke-linejoin="round"/></svg>
<div class="a" style="left:84px;top:914.28px;width:23px;height:23px;border:1px solid #c4c6d0;border-radius:4px;box-sizing:border-box;background:#fff"></div>
<div class="t" style="left:130px;top:912.13px;font-size:21.5px;line-height:26px;color:#006dca;font-weight:400;letter-spacing:-0.15px;">san francisco hotel</div>
<div class="a" style="left:414px;top:914.28px;width:22.7px;height:22.6px;background:#fde081;border-radius:5.5px;color:#a95700;font-weight:700;font-size:17.5px;line-height:24px;text-align:center">C</div>
<svg width="22" height="19" viewBox="0 0 22 19" style="position:absolute;left:489px;top:916.28px"><path d="M0 1 Q0 0 1 0 H20 Q21 0 21 1 V6 L19 4 V4 H3 V15 H8.5 L10.5 18 H1 Q0 18 0 17 Z" fill="#a4a6b3"/><circle cx="15" cy="12" r="3.6" fill="none" stroke="#a4a6b3" stroke-width="2.6"/><path d="M17.5 14.5 L20.2 17.2" stroke="#a4a6b3" stroke-width="2.6" stroke-linecap="round"/></svg>
<div class="a" style="left:522px;top:911.28px;width:1.3px;height:28px;background:#c9cbd4"></div>
<div class="t" style="left:535px;top:912.13px;font-size:21.5px;line-height:26px;color:#6c6e79;font-weight:400;letter-spacing:0px;">4</div>
<div class="a" style="left:534.4px;top:937.08px;width:12.8px;height:1.5px;background:repeating-linear-gradient(to right,#9597a3 0 3.2px,transparent 3.2px 4.8px)"></div>
<div class="t" style="left:571.5px;top:912.13px;font-size:21.5px;line-height:26px;color:#171a22;font-weight:400;letter-spacing:0px;"><span style="letter-spacing:-1.30px">7</span>5<span style="display:inline-block;width:17px;height:17px;border-radius:50%;background:#ff4953;vertical-align:baseline;position:relative;top:1px;margin-left:5.5px"></span></div>
<div class="t" style="right:864.00px;top:912.13px;font-size:21.5px;line-height:26px;color:#171a22;font-weight:400;letter-spacing:0px;">4</div>
<div class="t" style="right:722.00px;top:912.13px;font-size:21.5px;line-height:26px;color:#171a22;font-weight:400;letter-spacing:0px;">4</div>
<div class="t" style="right:651.00px;top:912.13px;font-size:21.5px;line-height:26px;color:#6c6e79;font-weight:400;letter-spacing:0px;">0</div>
<div class="t" style="right:557.00px;top:912.13px;font-size:21.5px;line-height:26px;color:#171a22;font-weight:400;letter-spacing:0px;"><span style="letter-spacing:-0.75px">0</span><span style="letter-spacing:-0.75px">.</span><span style="letter-spacing:-0.75px">5</span><span style="letter-spacing:-0.75px">0</span><span style="letter-spacing:-0.75px">5</span>%</div>
<div class="t" style="right:466.00px;top:912.13px;font-size:21.5px;line-height:26px;color:#6c6e79;font-weight:400;letter-spacing:0px;">0</div>
<div class="t" style="right:346.00px;top:912.13px;font-size:21.5px;line-height:26px;color:#171a22;font-weight:400;letter-spacing:0px;"><span style="letter-spacing:-0.25px">3</span><span style="letter-spacing:-0.25px">5</span><span style="letter-spacing:-0.25px">5</span><span style="letter-spacing:-0.25px">.</span><span style="letter-spacing:-0.25px">5</span>0</div>
<div class="t" style="right:221.00px;top:912.13px;font-size:21.5px;line-height:26px;color:#6c6e79;font-weight:400;letter-spacing:0px;">0</div>
<div class="t" style="right:88.20px;top:912.13px;font-size:21.5px;line-height:26px;color:#171a22;font-weight:400;letter-spacing:0px;"><span style="letter-spacing:-1.00px">1</span><span style="letter-spacing:-0.25px">3</span><span style="letter-spacing:-0.25px">5</span><span style="letter-spacing:-0.25px">,</span><span style="letter-spacing:-0.25px">0</span><span style="letter-spacing:-0.25px">0</span>0</div>
<div class="t" style="right:17.20px;top:912.13px;font-size:21.5px;line-height:26px;color:#171a22;font-weight:400;letter-spacing:0px;"><span style="letter-spacing:-0.25px">2</span><span style="letter-spacing:-0.25px">.</span><span style="letter-spacing:-0.25px">5</span>8</div>
<svg width="12" height="16" viewBox="0 0 12 16" style="position:absolute;left:57px;top:1010.72px"><path d="M3 2.5 L8.5 8 L3 13.5" fill="none" stroke="#555868" stroke-width="2.6" stroke-linecap="round" stroke-linejoin="round"/></svg>
<div class="a" style="left:84px;top:1007.72px;width:23px;height:23px;border:1px solid #c4c6d0;border-radius:4px;box-sizing:border-box;background:#fff"></div>
<div class="t" style="left:130px;top:1005.57px;font-size:21.5px;line-height:26px;color:#006dca;font-weight:400;letter-spacing:-0.15px;">apartments</div>
<div class="a" style="left:414px;top:1007.72px;width:22.7px;height:22.6px;background:#e3d4fb;border-radius:5.5px;color:#8649e1;font-weight:700;font-size:17.5px;line-height:24px;text-align:center">N</div>
<svg width="22" height="19" viewBox="0 0 22 19" style="position:absolute;left:489px;top:1009.72px"><path d="M0 1 Q0 0 1 0 H20 Q21 0 21 1 V6 L19 4 V4 H3 V15 H8.5 L10.5 18 H1 Q0 18 0 17 Z" fill="#a4a6b3"/><circle cx="15" cy="12" r="3.6" fill="none" stroke="#a4a6b3" stroke-width="2.6"/><path d="M17.5 14.5 L20.2 17.2" stroke="#a4a6b3" stroke-width="2.6" stroke-linecap="round"/></svg>
<div class="a" style="left:522px;top:1004.72px;width:1.3px;height:28px;background:#c9cbd4"></div>
<div class="t" style="left:535px;top:1005.57px;font-size:21.5px;line-height:26px;color:#6c6e79;font-weight:400;letter-spacing:0px;">5</div>
<div class="a" style="left:534.4px;top:1030.52px;width:12.8px;height:1.5px;background:repeating-linear-gradient(to right,#9597a3 0 3.2px,transparent 3.2px 4.8px)"></div>
<div class="t" style="left:571.5px;top:1005.57px;font-size:21.5px;line-height:26px;color:#171a22;font-weight:400;letter-spacing:0px;"><span style="letter-spacing:-0.25px">9</span>4<span style="display:inline-block;width:17px;height:17px;border-radius:50%;background:#ff4953;vertical-align:baseline;position:relative;top:1px;margin-left:5.5px"></span></div>
<div class="t" style="right:864.00px;top:1005.57px;font-size:21.5px;line-height:26px;color:#171a22;font-weight:400;letter-spacing:0px;"><span style="letter-spacing:-0.25px">3</span>3</div>
<div class="t" style="right:722.00px;top:1005.57px;font-size:21.5px;line-height:26px;color:#171a22;font-weight:400;letter-spacing:0px;">5</div>
<div class="t" style="right:651.00px;top:1005.57px;font-size:21.5px;line-height:26px;color:#008469;font-weight:400;letter-spacing:0px;"><svg width="13" height="15" viewBox="0 0 13 15" style="display:inline-block;vertical-align:-1px;margin-right:3px"><path d="M6.5 14 V1.4 M1.2 6.6 L6.5 1.3 L11.8 6.6" fill="none" stroke="#008469" stroke-width="1.8" stroke-linecap="round" stroke-linejoin="round"/></svg><span style="letter-spacing:-0.25px">2</span>8</div>
<div class="t" style="right:557.00px;top:1005.57px;font-size:21.5px;line-height:26px;color:#171a22;font-weight:400;letter-spacing:0px;"><span style="letter-spacing:-0.75px">0</span><span style="letter-spacing:-0.75px">.</span><span style="letter-spacing:-0.75px">3</span><span style="letter-spacing:-0.75px">9</span>%</div>
<div class="t" style="right:466.00px;top:1005.57px;font-size:21.5px;line-height:26px;color:#008469;font-weight:400;letter-spacing:0px;"><span style="letter-spacing:0.50px">+</span><span style="letter-spacing:-0.25px">0</span><span style="letter-spacing:-0.25px">.</span><span style="letter-spacing:-0.25px">3</span><span style="letter-spacing:-0.25px">4</span>1</div>
<div class="t" style="right:346.00px;top:1005.57px;font-size:21.5px;line-height:26px;color:#171a22;font-weight:400;letter-spacing:0px;"><span style="letter-spacing:-0.25px">8</span><span style="letter-spacing:-0.25px">,</span><span style="letter-spacing:-0.25px">3</span><span style="letter-spacing:-1.00px">1</span><span style="letter-spacing:-0.25px">6</span><span style="letter-spacing:-0.25px">.</span><span style="letter-spacing:-0.25px">3</span>3</div>
<div class="t" style="right:221.00px;top:1005.57px;font-size:21.5px;line-height:26px;color:#008469;font-weight:400;letter-spacing:0px;"><span style="letter-spacing:0.50px">+</span><span style="letter-spacing:-1.30px">7</span><span style="letter-spacing:-0.25px">,</span><span style="letter-spacing:-0.25px">2</span><span style="letter-spacing:-0.25px">8</span><span style="letter-spacing:-0.25px">0</span><span style="letter-spacing:-0.25px">.</span><span style="letter-spacing:-0.25px">2</span>0</div>
<div class="t" style="right:88.20px;top:1005.57px;font-size:21.5px;line-height:26px;color:#171a22;font-weight:400;letter-spacing:0px;"><span style="letter-spacing:-0.25px">4</span><span style="letter-spacing:-0.25px">,</span><span style="letter-spacing:-0.25px">0</span><span style="letter-spacing:-0.25px">9</span><span style="letter-spacing:-0.25px">0</span><span style="letter-spacing:-0.25px">,</span><span style="letter-spacing:-0.25px">0</span><span style="letter-spacing:-0.25px">0</span>0</div>
<div class="t" style="right:17.20px;top:1005.57px;font-size:21.5px;line-height:26px;color:#171a22;font-weight:400;letter-spacing:0px;"><span style="letter-spacing:-0.25px">0</span><span style="letter-spacing:-0.25px">.</span><span style="letter-spacing:-0.25px">8</span>1</div>
<div class="a" style="left:745px;top:179px;width:151px;height:1000px;border:8px solid #b780fd;border-top-width:9px;border-bottom:none;box-sizing:border-box;z-index:3"></div>
<div class="a" style="left:0;top:985px;width:1600px;height:49px;z-index:5;background:linear-gradient(to bottom, rgba(255,255,255,0) 0%, rgba(255,255,255,0.55) 40%, rgba(255,255,255,0.95) 85%, #fff 100%)"></div>
</body></html>
